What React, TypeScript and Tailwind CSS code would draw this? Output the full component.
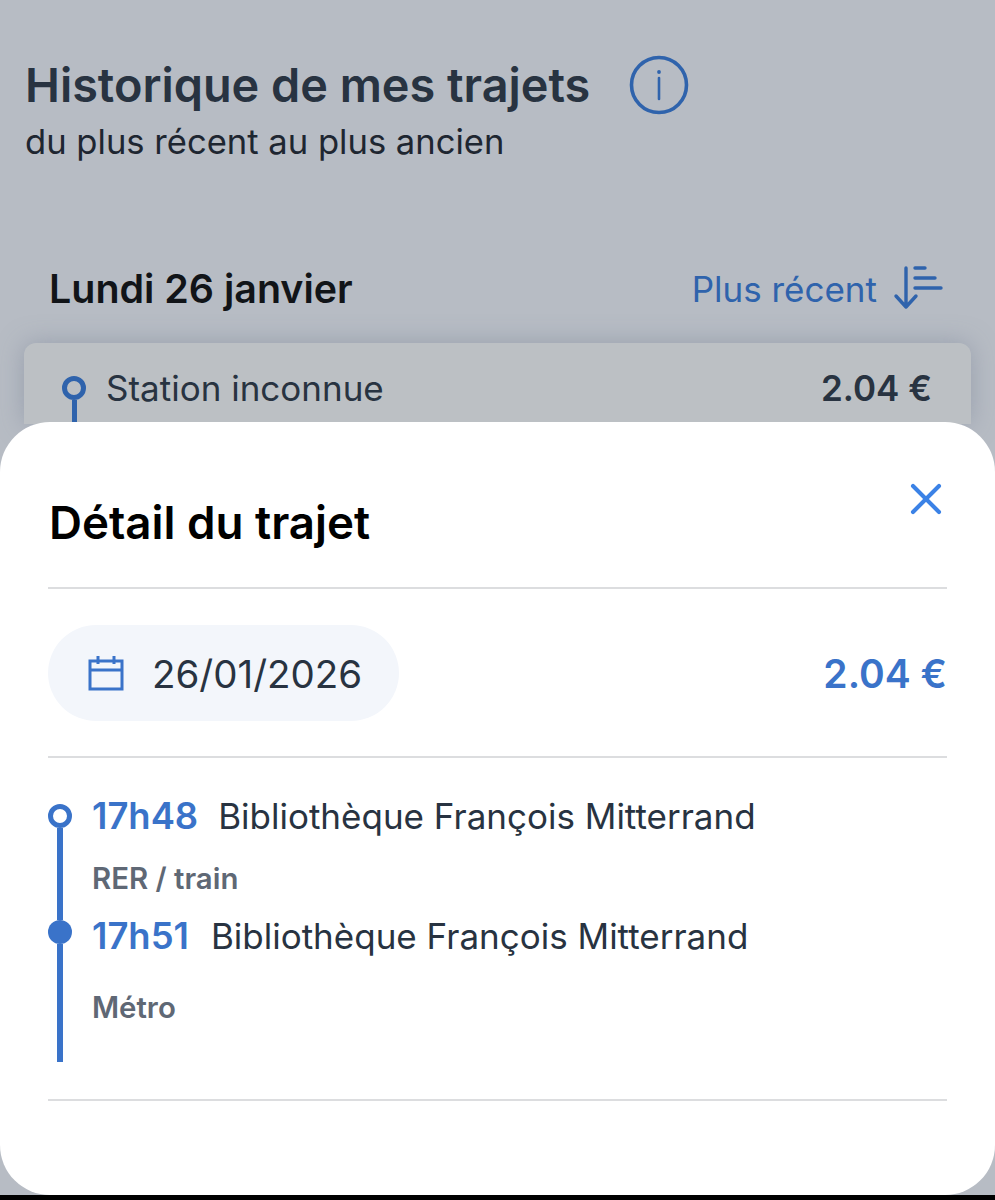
import { X } from "lucide-react";

const font = { fontFamily: "Inter, 'Liberation Sans', sans-serif" };

const InfoIcon = () => (
  <svg width="60" height="60" viewBox="0 0 60 60" fill="none" stroke="#2f63ac">
    <circle cx="30" cy="30" r="27.5" strokeWidth="3.6" />
    <path d="M30 23v21" strokeWidth="2.6" strokeLinecap="round" />
    <circle cx="30" cy="17" r="1.9" fill="#2f63ac" stroke="none" />
  </svg>
);

const SortIcon = () => (
  <svg width="50" height="46" viewBox="0 0 50 46" fill="none" stroke="#2f63ac" strokeWidth="3.4" strokeLinecap="round" strokeLinejoin="round">
    <path d="M13 2v39M3 30l10 11 10-11" />
    <path d="M22 2h10M22 12h20M22 22h26" />
  </svg>
);

const CalendarIcon = () => (
  <svg width="36" height="36" viewBox="0 0 36 36" fill="none" stroke="#3a73c9" strokeWidth="3">
    <path d="M2 6h32v28H2zM2 15h32M10 1v8M26 1v8" />
  </svg>
);

export default function App() {
  return (
    <div className="relative flex h-[1200px] w-[995px] flex-col overflow-hidden bg-black" style={font}>
      <div className="h-[1195px] bg-[#b7bcc4] pt-[55px]">
        <div className="flex items-center pl-[25px]">
          <h1 className="text-[46.8px] leading-[60px] font-semibold text-[#283341]">Historique de mes trajets</h1>
          <div className="ml-[39px]">
            <InfoIcon />
          </div>
        </div>
        <p className="mt-[4px] pl-[25px] text-[34.6px] leading-[44px] text-[#1e2631]">du plus récent au plus ancien</p>

        <div className="mt-[102px] flex items-center justify-between pr-[52px] pl-[49px]">
          <h2 className="text-[39.4px] leading-[48px] font-semibold text-[#111418]">Lundi 26 janvier</h2>
          <div className="flex items-center gap-[16px]">
            <span className="text-[35px] leading-[44px] text-[#2f63ac]">Plus récent</span>
            <SortIcon />
          </div>
        </div>

        <div className="mx-[24px] mt-[30px] rounded-t-[12px] bg-[#bcc0c4] pt-[21px] pr-[39px] pl-[38px] shadow-[0_0_24px_rgba(120,130,150,0.5)]">
          <div className="flex items-center justify-between">
            <div className="flex items-center gap-[20px]">
              <div className="mt-[12px] flex flex-col items-center">
                <span className="h-[24px] w-[24px] rounded-full border-[5px] border-[#2f63ac]" />
                <span className="h-[24px] w-[5px] bg-[#2f63ac]" />
              </div>
              <span className="-mt-[12px] text-[35px] leading-[44px] text-[#283341]">Station inconnue</span>
            </div>
            <span className="-mt-[12px] text-[35px] leading-[44px] font-semibold text-[#283341]">2.04 €</span>
          </div>
        </div>
      </div>

      <div className="absolute top-[422px] left-0 h-[773px] w-full rounded-[50px] bg-white px-[48px]">
        <div className="flex h-[167px] items-start justify-between border-b-2 border-[#dcdddf]">
          <h2 className="mt-[72px] ml-[1px] text-[45.7px] leading-[58px] font-semibold text-black">Détail du trajet</h2>
          <X className="mt-[51px] -mr-[5px]" size={52} strokeWidth={1.9} color="#3b82e6" />
        </div>

        <div className="flex h-[169px] items-center justify-between border-b-2 border-[#dcdddf] pt-[1px]">
          <div className="flex h-[96px] w-[351px] items-center gap-[28px] rounded-full bg-[#f3f6fb] pl-[40px]">
            <CalendarIcon />
            <span className="mt-[2px] text-[38.5px] leading-[52px] text-[#283341]">26/01/2026</span>
          </div>
          <span className="mt-[2px] text-[39px] leading-[52px] font-semibold text-[#3a73c9]">2.04 €</span>
        </div>

        <div className="flex h-[343px] items-start gap-[20px] border-b-2 border-[#dcdddf] pt-[46px]">
          <div className="flex w-[24px] flex-col items-center">
            <span className="h-[24px] w-[24px] shrink-0 rounded-full border-[5px] border-[#3a73c9]" />
            <span className="h-[92px] w-[6px] bg-[#3a73c9]" />
            <span className="h-[24px] w-[24px] shrink-0 rounded-full bg-[#3a73c9]" />
            <span className="h-[118px] w-[6px] bg-[#3a73c9]" />
          </div>
          <div className="-mt-[12px] flex flex-col">
            <div className="flex items-center gap-[20px] text-[35px] leading-[48px]">
              <span className="text-[36.4px] font-semibold text-[#3a73c9]">17h48</span>
              <span className="text-[#283341]">Bibliothèque François Mitterrand</span>
            </div>
            <span className="mt-[21px] text-[29.4px] leading-[36px] font-semibold text-[#5f6875]">RER / train</span>
            <div className="mt-[15px] flex items-center gap-[22px] text-[35px] leading-[48px]">
              <span className="text-[36.4px] font-semibold text-[#3a73c9]">17h51</span>
              <span className="text-[#283341]">Bibliothèque François Mitterrand</span>
            </div>
            <span className="mt-[30px] text-[29.4px] leading-[36px] font-semibold text-[#5f6875]">Métro</span>
          </div>
        </div>
      </div>
    </div>
  );
}
